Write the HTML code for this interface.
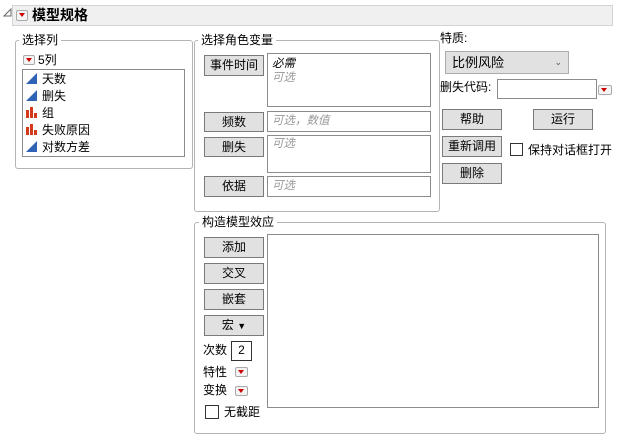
<!DOCTYPE html><html><head><meta charset="utf-8"><style>
body{margin:0;width:618px;height:436px;background:#fff;position:relative;overflow:hidden;font-family:"Liberation Sans","Noto Sans CJK SC",sans-serif;font-size:12px;color:#000}
.a{position:absolute}
.grp{position:absolute;border:1px solid #b4b4b4;border-radius:3px}
.lbl{position:absolute;background:#fff;padding:0 3px;font-size:12px;line-height:14px}
.btn{position:absolute;background:#e1e1e1;border:1px solid #7a7a7a;box-sizing:border-box;text-align:center;font-size:12px;line-height:18px}
.fld{position:absolute;border:1px solid #8c8c8c;box-sizing:border-box;background:#fff;color:#999;font-style:italic;padding-left:4px;font-size:11.5px;line-height:18px}
.rb{position:absolute;width:12px;height:10px;border:1px solid #aaa;border-radius:2px;background:#f4f4f4;box-sizing:border-box}
.rb:after{content:"";position:absolute;left:2px;top:2px;border-left:3.5px solid transparent;border-right:3.5px solid transparent;border-top:4px solid #c00}
.cb{position:absolute;width:13px;height:13px;border:1px solid #333;box-sizing:border-box;background:#fff}
.it{position:absolute;left:42px;font-size:12px;line-height:14px}
</style></head><body>
<svg class="a" style="left:3px;top:8px" width="9" height="9"><path d="M8 1V8H1Z" fill="none" stroke="#666"/></svg>
<div class="a" style="left:12px;top:5px;width:601px;height:21px;background:#f0f0f0;border:1px solid #d4d4d4;box-sizing:border-box"></div>
<div class="rb" style="left:16px;top:10px;width:12px;height:11px"></div>
<div class="a" style="left:32px;top:7px;font-weight:bold;font-size:14px;line-height:17px">模型规格</div>

<div class="grp" style="left:15px;top:40px;width:176px;height:127px"></div>
<div class="lbl" style="left:19px;top:33px">选择列</div>
<div class="rb" style="left:23px;top:55px"></div>
<div class="a" style="left:38px;top:53px;line-height:14px">5列</div>
<div class="a" style="left:22px;top:69px;width:163px;height:88px;border:1px solid #8c8c8c;box-sizing:border-box"></div>
<svg class="a" style="left:26px;top:73px" width="12" height="80">
<path d="M0 11L11 0V11Z" fill="#2f63b5"/><path d="M0 28L11 17V28Z" fill="#2f63b5"/>
<path d="M0 45V37h3v8zM4 45V34h3v11zM8 45V40h3v5z" fill="#d23a1a"/>
<path d="M0 62V54h3v8zM4 62V51h3v11zM8 62V57h3v5z" fill="#d23a1a"/>
<path d="M0 79L11 68V79Z" fill="#2f63b5"/></svg>
<div class="it" style="top:72px">天数</div>
<div class="it" style="top:89px">删失</div>
<div class="it" style="top:106px">组</div>
<div class="it" style="top:123px">失败原因</div>
<div class="it" style="top:140px">对数方差</div>

<div class="grp" style="left:194px;top:40px;width:244px;height:170px"></div>
<div class="lbl" style="left:198px;top:33px">选择角色变量</div>
<div class="btn" style="left:204px;top:55px;width:60px;height:21px">事件时间</div>
<div class="btn" style="left:204px;top:112px;width:60px;height:20px">频数</div>
<div class="btn" style="left:204px;top:137px;width:60px;height:20px">删失</div>
<div class="btn" style="left:204px;top:176px;width:60px;height:21px">依据</div>
<div class="fld" style="left:267px;top:53px;width:164px;height:54px;line-height:14px;padding-top:3px"><span style="color:#000">必需</span><br>可选</div>
<div class="fld" style="left:267px;top:111px;width:164px;height:21px">可选，数值</div>
<div class="fld" style="left:267px;top:135px;width:164px;height:38px;line-height:16px">可选</div>
<div class="fld" style="left:267px;top:176px;width:164px;height:21px">可选</div>

<div class="a" style="left:440px;top:31px;line-height:14px">特质:</div>
<div class="btn" style="left:445px;top:51px;width:124px;height:23px;text-align:left;padding-left:6px;line-height:21px;font-size:13px;border-color:#adadad">比例风险<span style="position:absolute;right:6px;font-size:9px;color:#555">⌄</span></div>
<div class="a" style="left:440px;top:80px;line-height:14px">删失代码:</div>
<div class="a" style="left:497px;top:79px;width:100px;height:20px;border:1px solid #8c8c8c;box-sizing:border-box"></div>
<div class="rb" style="left:598px;top:85px;width:14px"></div>
<div class="btn" style="left:442px;top:109px;width:60px;height:21px">帮助</div>
<div class="btn" style="left:533px;top:109px;width:60px;height:21px">运行</div>
<div class="btn" style="left:442px;top:136px;width:60px;height:21px">重新调用</div>
<div class="cb" style="left:510px;top:143px"></div>
<div class="a" style="left:528px;top:143px;line-height:14px">保持对话框打开</div>
<div class="btn" style="left:442px;top:163px;width:60px;height:21px">删除</div>

<div class="grp" style="left:194px;top:222px;width:410px;height:210px"></div>
<div class="lbl" style="left:199px;top:215px">构造模型效应</div>
<div class="btn" style="left:204px;top:237px;width:60px;height:21px">添加</div>
<div class="btn" style="left:204px;top:263px;width:60px;height:21px">交叉</div>
<div class="btn" style="left:204px;top:289px;width:60px;height:21px">嵌套</div>
<div class="btn" style="left:204px;top:315px;width:60px;height:21px">宏 <span style="font-size:9px">▼</span></div>
<div class="a" style="left:203px;top:343px;line-height:14px">次数</div>
<div class="a" style="left:231px;top:341px;width:21px;height:20px;border:1px solid #333;box-sizing:border-box;text-align:center;line-height:17px">2</div>
<div class="a" style="left:203px;top:365px;line-height:14px">特性</div>
<div class="rb" style="left:235px;top:367px;width:13px"></div>
<div class="a" style="left:203px;top:383px;line-height:14px">变换</div>
<div class="rb" style="left:235px;top:386px;width:13px"></div>
<div class="cb" style="left:205px;top:405px;width:14px;height:14px"></div>
<div class="a" style="left:224px;top:405px;line-height:14px">无截距</div>
<div class="a" style="left:267px;top:234px;width:332px;height:174px;border:1px solid #8c8c8c;box-sizing:border-box"></div>
</body></html>
